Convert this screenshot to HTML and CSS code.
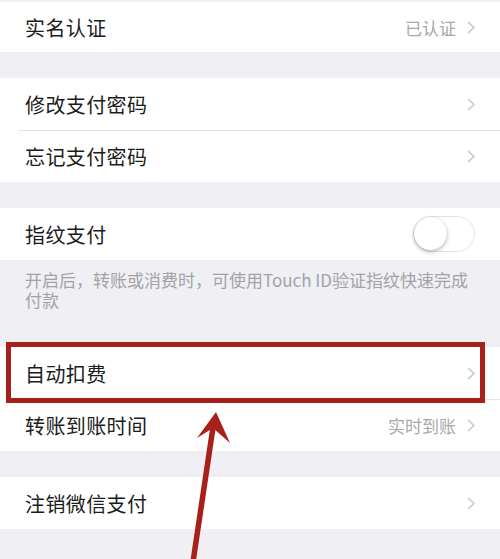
FILE: index.html
```html
<!DOCTYPE html>
<html lang="zh-CN">
<head>
    <meta charset="UTF-8">
    <meta name="viewport" content="width=device-width, initial-scale=1.0">
    <title>支付管理</title>
    <link rel="stylesheet" href="styles.css">
</head>
<body>
    <div class="page">
        <div class="group">
            <div class="row row-first">
                <span class="label">实名认证</span>
                <span class="value">已认证</span>
                <svg class="chevron" width="8" height="13" viewBox="0 0 8 13"><polyline points="1,1 7,6.5 1,12"/></svg>
            </div>
        </div>

        <div class="group">
            <div class="row">
                <span class="label">修改支付密码</span>
                <svg class="chevron" width="8" height="13" viewBox="0 0 8 13"><polyline points="1,1 7,6.5 1,12"/></svg>
            </div>
            <div class="row">
                <span class="label">忘记支付密码</span>
                <svg class="chevron" width="8" height="13" viewBox="0 0 8 13"><polyline points="1,1 7,6.5 1,12"/></svg>
            </div>
        </div>

        <div class="group group-tight">
            <div class="row">
                <span class="label">指纹支付</span>
                <div class="switch"><div class="knob"></div></div>
            </div>
        </div>
        <p class="hint">开启后，转账或消费时，可使用Touch ID验证指纹快速完成付款</p>

        <div class="group">
            <div class="row">
                <span class="label">自动扣费</span>
                <svg class="chevron" width="8" height="13" viewBox="0 0 8 13"><polyline points="1,1 7,6.5 1,12"/></svg>
            </div>
            <div class="row">
                <span class="label">转账到账时间</span>
                <span class="value">实时到账</span>
                <svg class="chevron" width="8" height="13" viewBox="0 0 8 13"><polyline points="1,1 7,6.5 1,12"/></svg>
            </div>
        </div>

        <div class="group">
            <div class="row">
                <span class="label">注销微信支付</span>
                <svg class="chevron" width="8" height="13" viewBox="0 0 8 13"><polyline points="1,1 7,6.5 1,12"/></svg>
            </div>
        </div>

        <!-- annotation drawn over the screenshot -->
        <div class="mark-box"></div>
        <svg class="mark-arrow" width="500" height="559" viewBox="0 0 500 559">
            <line x1="193" y1="562" x2="213.5" y2="424"/>
            <polygon points="216,412 230,443 213,428 197,438"/>
        </svg>
    </div>
</body>
</html>
```

FILE: styles.css
```css
:root {
    --bg-color: #efeff4;
    --line-color: #e4e4e8;
    --mark-color: #a8201b;
}

* {
    margin: 0;
    padding: 0;
    box-sizing: border-box;
}

body {
    font-family: "Noto Sans CJK SC", "Noto Sans", sans-serif;
    background: var(--bg-color);
    color: #1c1c1c;
    width: 500px;
    height: 559px;
    overflow: hidden;
}

.page {
    position: relative;
    padding-top: 2px;
    height: 559px;
}

.group {
    background: white;
    margin-bottom: 26px;
}

.group-tight {
    margin-bottom: 0;
}

.row {
    height: 52px;
    display: flex;
    align-items: center;
    padding: 0 25px;
    background: white;
}

.row-first {
    height: 50px;
}

.row + .row {
    margin-left: 18px;
    padding-left: 7px;
    border-top: 1px solid var(--line-color);
}

.label {
    flex: 1;
    font-size: 20px;
    letter-spacing: 0.4px;
}

.value {
    font-size: 17px;
    color: #a8a8a8;
    margin-right: 11px;
}

.chevron polyline {
    fill: none;
    stroke: #c4c4c8;
    stroke-width: 1.5;
}

.switch {
    width: 62px;
    height: 36px;
    border: 1.5px solid #e2e2e2;
    border-radius: 18px;
    background: white;
    position: relative;
}

.knob {
    position: absolute;
    left: 0;
    top: 0;
    width: 33px;
    height: 33px;
    border-radius: 50%;
    background: white;
    box-shadow: 0 2px 4px rgba(0, 0, 0, 0.25), 0 0 1px rgba(0, 0, 0, 0.2);
}

.hint {
    font-size: 17px;
    line-height: 20px;
    color: #a3a3a6;
    padding: 10px 25px 37px 25px;
}

.mark-box {
    position: absolute;
    left: 6px;
    top: 342px;
    width: 479px;
    height: 61px;
    border: 5px solid var(--mark-color);
}

.mark-arrow {
    position: absolute;
    left: 0;
    top: 0;
    pointer-events: none;
}

.mark-arrow line {
    stroke: var(--mark-color);
    stroke-width: 5.5;
}

.mark-arrow polygon {
    fill: var(--mark-color);
}
```
